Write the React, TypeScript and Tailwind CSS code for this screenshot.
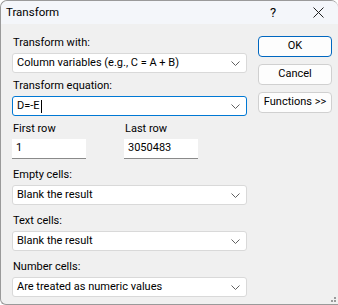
import React from "react";

function Chevron() {
  return (
    <svg width="9" height="5" viewBox="0 0 9 5" className="shrink-0">
      <path d="M0.5 0.5 L4.5 4.5 L8.5 0.5" fill="none" stroke="#606060" strokeWidth="1" />
    </svg>
  );
}

function Combo({ value, focused = false }: { value: string; focused?: boolean }) {
  return (
    <div
      className={
        "flex h-[20px] w-[235px] items-center justify-between rounded-[3px] bg-white pl-[4px] pr-[6px] " +
        (focused ? "border border-[#0078d4]" : "border border-[#d9d9d9]")
      }
    >
      <span className="flex items-center">
        {value}
        {focused && <span className="ml-[1px] inline-block h-[13px] w-[1px] bg-black" />}
      </span>
      <Chevron />
    </div>
  );
}

function Field({ label, className = "", children }: { label: string; className?: string; children: React.ReactNode }) {
  return (
    <div className={"flex flex-col " + className}>
      <span className="pl-[1px] leading-[15px]">{label}</span>
      <div className="mt-[3px]">{children}</div>
    </div>
  );
}

function Button({ label, primary = false }: { label: string; primary?: boolean }) {
  return (
    <div
      className={
        "flex h-[21px] w-[74px] items-center justify-center rounded-[4px] bg-[#fdfdfd] " +
        (primary ? "border-[1.5px] border-[#0067c0]" : "border border-[#d0d0d0]")
      }
    >
      {label}
    </div>
  );
}

export default function App() {
  return (
    <div
      className="h-[305px] w-[338px] overflow-hidden text-[11px] text-black"
      style={{ fontFamily: '"Segoe UI", Roboto, "Liberation Sans", sans-serif' }}
    >
      <div className="flex h-full flex-col rounded-t-[7px] rounded-bl-[6px] border-b border-l border-t border-[#9a9a9a] bg-[#f0f0f0]">
        {/* title bar */}
        <div className="flex h-[23px] items-center rounded-t-[7px] bg-[#f4f6fa] pl-[5px]">
          <span className="flex-1 text-[11.5px]">Transform</span>
          <span className="w-[20px] text-center text-[13px]">?</span>
          <span className="ml-[25px] mr-[10px] flex w-[20px] items-center justify-center">
            <svg width="11" height="11" viewBox="0 0 11 11">
              <path d="M0.5 0.5 L10.5 10.5 M10.5 0.5 L0.5 10.5" stroke="#202020" strokeWidth="1" />
            </svg>
          </span>
        </div>

        {/* body */}
        <div className="relative flex flex-1 pl-[11px] pt-[11px]">
          <div className="flex flex-col">
            <Field label="Transform with:">
              <Combo value="Column variables (e.g., C = A + B)" />
            </Field>
            <Field label="Transform equation:" className="mt-[5px]">
              <Combo value="D=-E" focused />
            </Field>
            <div className="mt-[5px] flex gap-[38px]">
              <Field label="First row">
                <div className="flex h-[20px] w-[74px] items-center border-b border-b-[#8a8a8a] bg-white pl-[4px]">1</div>
              </Field>
              <Field label="Last row">
                <div className="flex h-[20px] w-[74px] items-center border-b border-b-[#8a8a8a] bg-white pl-[4px]">3050483</div>
              </Field>
            </div>
            <Field label="Empty cells:" className="mt-[8px]">
              <Combo value="Blank the result" />
            </Field>
            <Field label="Text cells:" className="mt-[8px]">
              <Combo value="Blank the result" />
            </Field>
            <Field label="Number cells:" className="mt-[8px]">
              <Combo value="Are treated as numeric values" />
            </Field>
          </div>

          <div className="ml-[11px] flex flex-col gap-[7px] pt-[1px]">
            <Button label="OK" primary />
            <Button label="Cancel" />
            <Button label="Functions >>" />
          </div>

          <div className="absolute bottom-[2px] right-[2px] grid grid-cols-2 gap-[1px]">
            <span className="h-[2px] w-[2px]" />
            <span className="h-[2px] w-[2px] bg-[#9a9a9a]" />
            <span className="h-[2px] w-[2px] bg-[#9a9a9a]" />
            <span className="h-[2px] w-[2px] bg-[#9a9a9a]" />
          </div>
        </div>
      </div>
    </div>
  );
}
